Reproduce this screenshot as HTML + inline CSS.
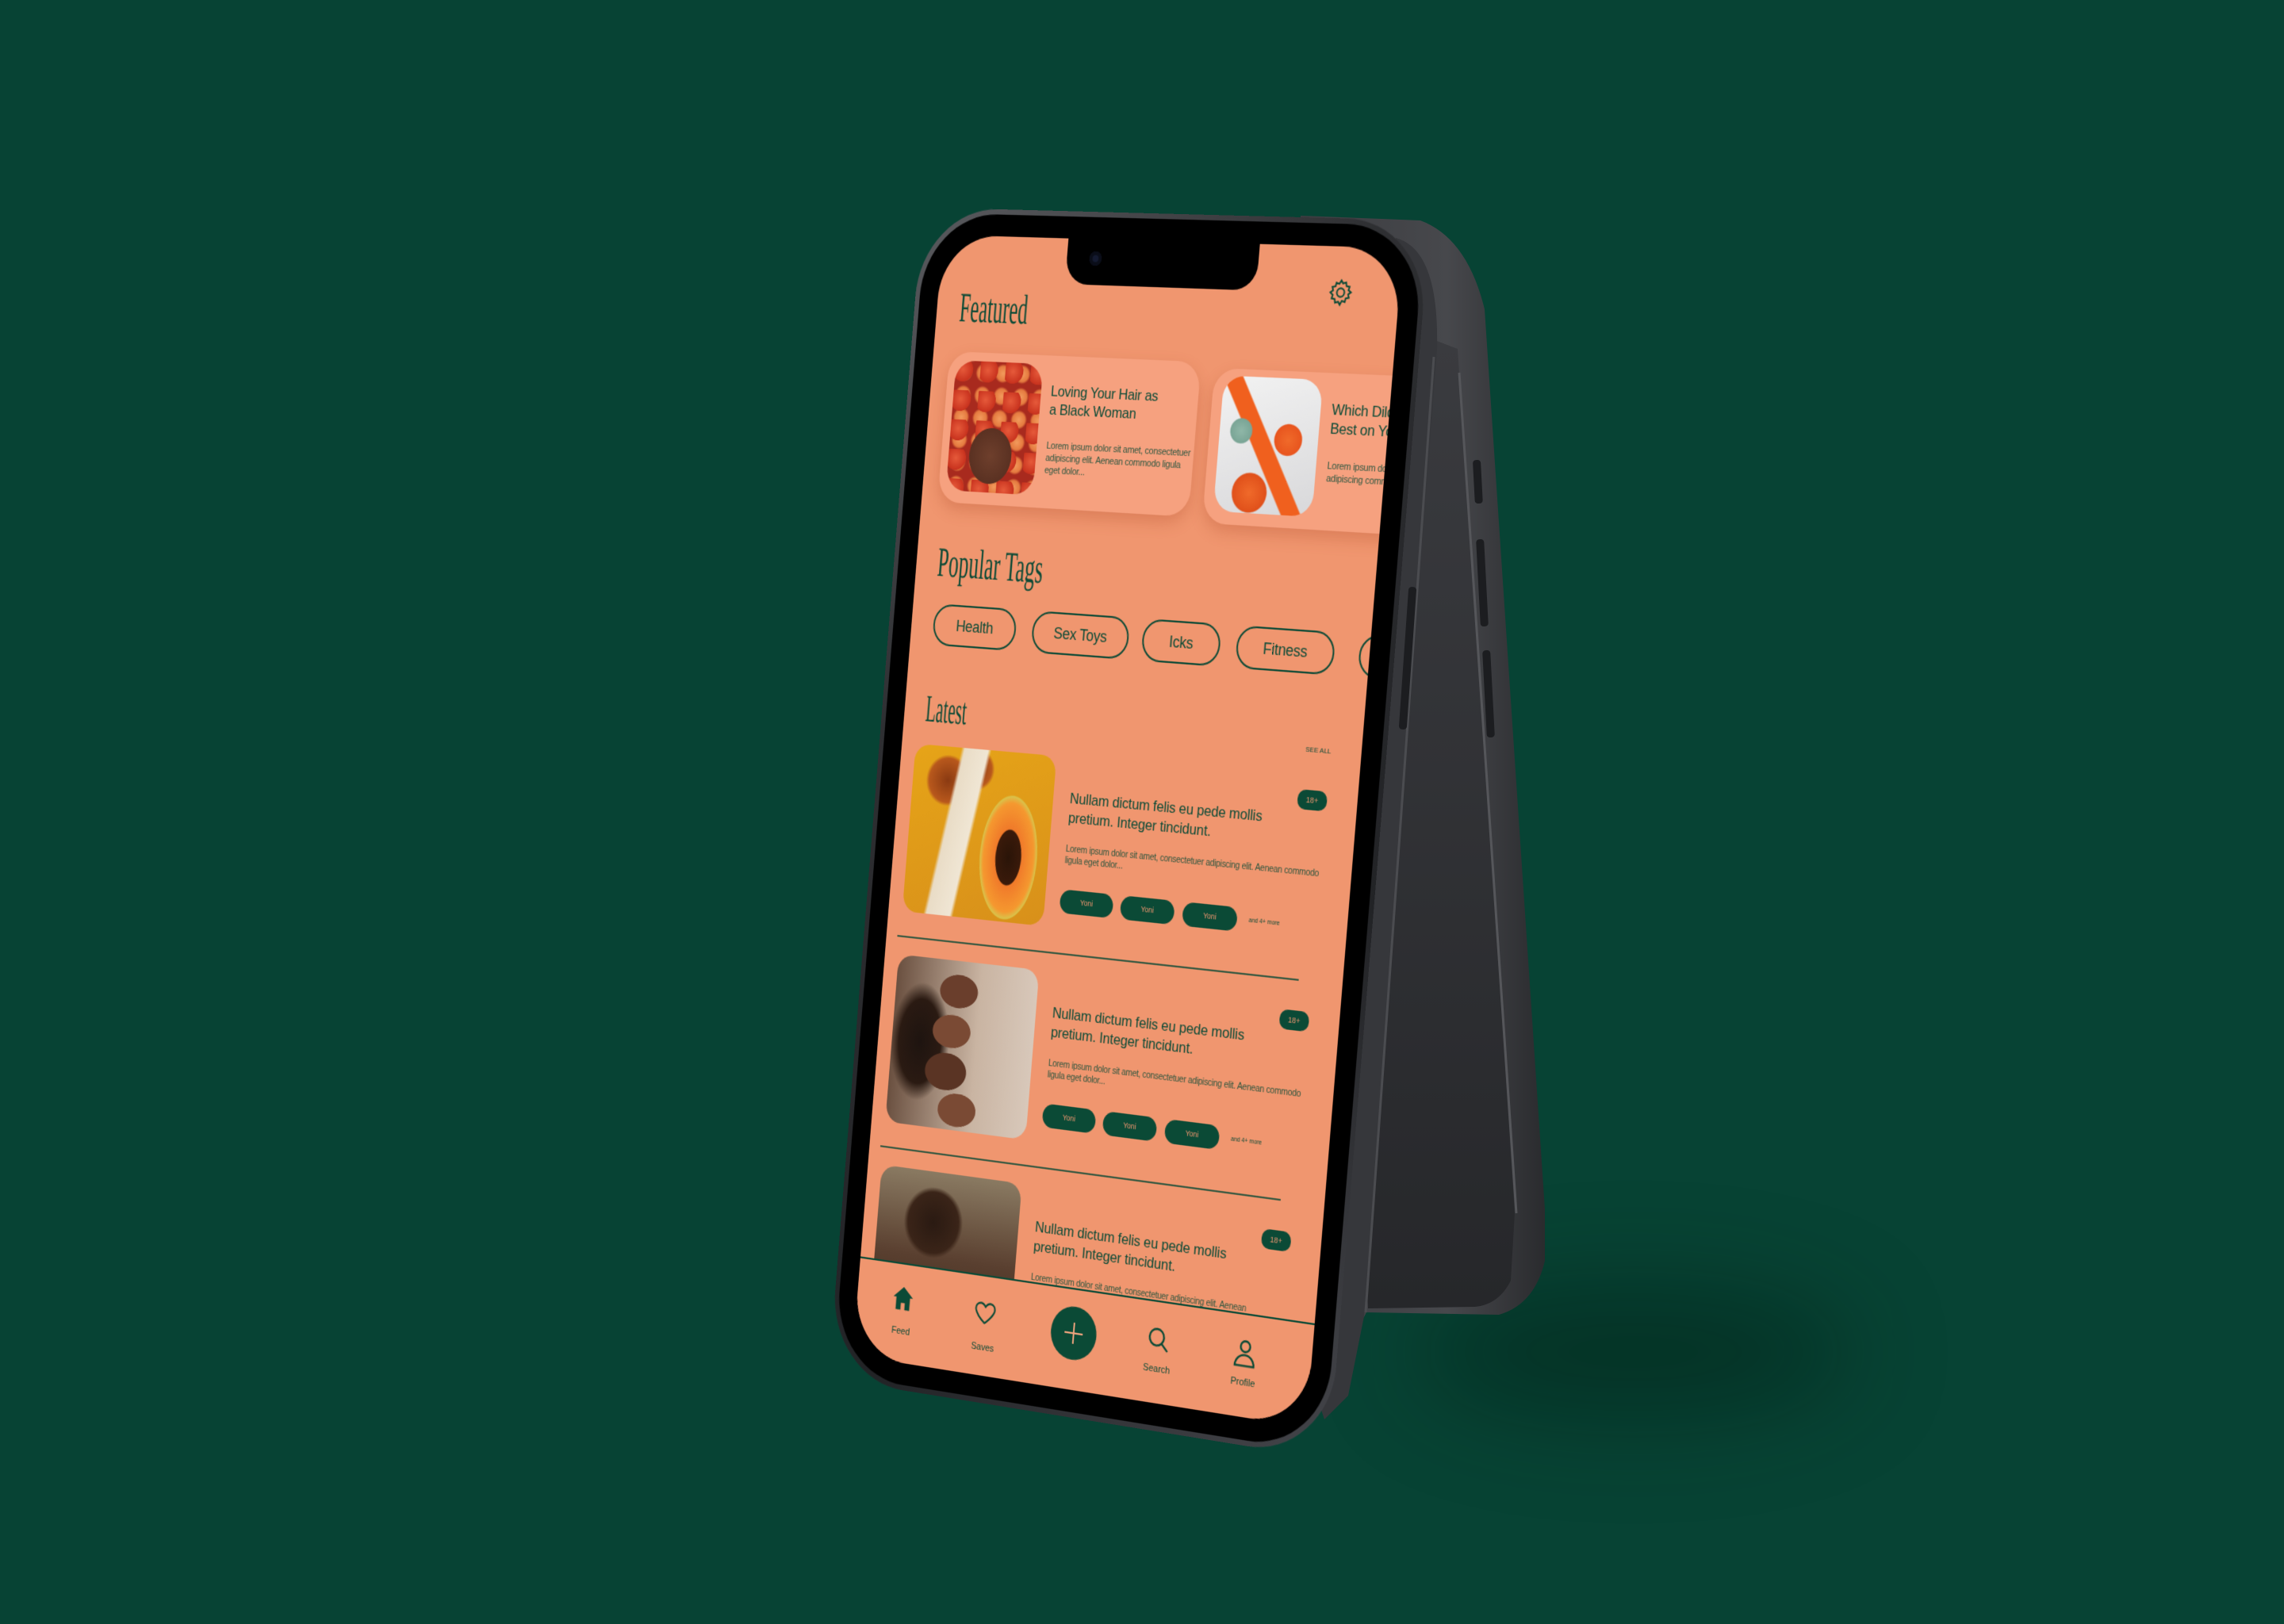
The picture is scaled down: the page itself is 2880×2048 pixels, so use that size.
<!DOCTYPE html>
<html><head><meta charset="utf-8"><style>
html,body{margin:0;padding:0}
body{width:2880px;height:2048px;overflow:hidden;background:#074334;position:relative;font-family:"Liberation Sans",sans-serif}
.abs{position:absolute}
#phone{position:absolute;left:0;top:0;width:600px;height:1300px;transform-origin:0 0;
transform:matrix3d(0.81935,0.0022667,0,-0.00008328,-0.084938,1.09130,0,0.0000025603,0,0,1,0,1189,296,0,1)}
.rim{position:absolute;left:-31px;top:-31px;right:-31px;bottom:-31px;border-radius:103px;background:linear-gradient(135deg,#5a5b5f,#2e2f32 30%,#222326 70%,#44454a);}
.bezel{position:absolute;left:-25px;top:-25px;right:-25px;bottom:-25px;border-radius:97px;background:#000}
.screen{position:absolute;left:0;top:0;width:600px;height:1300px;border-radius:74px;background:#f0966f;overflow:hidden;color:#0b4a36}
.h{position:absolute;font-family:"Liberation Serif",serif;font-size:48px;line-height:1;white-space:nowrap;transform-origin:0 0;color:#0d4a36}
.card{position:absolute;width:335px;height:174px;border-radius:30px;background:#f6a17f;box-shadow:0 8px 18px rgba(170,70,35,.28)}
.cimg{position:absolute;left:10px;top:10px;width:118px;height:150px;border-radius:26px;overflow:hidden}
.ct{position:absolute;left:141px;top:30px;font-size:17px;line-height:21px;width:190px;letter-spacing:-.3px;white-space:nowrap}
.cl{position:absolute;left:141px;top:96px;font-size:11px;line-height:14px;width:190px;letter-spacing:-.3px;opacity:.85}
.tag{position:absolute;top:425px;height:44px;border:2.5px solid #0d4a36;border-radius:26px;font-size:18px;line-height:44px;text-align:center;letter-spacing:-.3px}
.iimg{position:absolute;left:19px;width:191px;height:194px;border-radius:20px;overflow:hidden}
.it{position:absolute;left:232px;font-size:17px;line-height:22px;width:330px;letter-spacing:-.2px}
.il{position:absolute;left:232px;font-size:10.5px;line-height:13px;width:330px;letter-spacing:-.3px;opacity:.85}
.chip{position:absolute;width:70px;height:27px;border-radius:14px;background:#0b4a36;color:#f0966f;font-size:9px;line-height:27px;text-align:center}
.more{position:absolute;left:476px;font-size:7px}
.badge{position:absolute;left:525px;width:37px;height:22px;border-radius:10px;background:#0b4a36;color:#f0966f;font-size:9px;line-height:22px;text-align:center}
.div{position:absolute;left:15px;width:530px;height:1.5px;background:#0b4a36;opacity:.8}
.nl{position:absolute;top:1258px;font-size:11px;width:80px;text-align:center}
</style></head><body>

<div class="abs" style="left:1780px;top:1620px;width:560px;height:170px;border-radius:50%;background:rgba(0,20,12,.35);filter:blur(60px)"></div>

<svg class="abs" style="left:0;top:0" width="2880" height="2048">
<defs>
<linearGradient id="g1" x1="0" y1="0" x2="1" y2="0"><stop offset="0" stop-color="#3b3c40"/><stop offset=".6" stop-color="#47484c"/><stop offset="1" stop-color="#2a2b2e"/></linearGradient>
<linearGradient id="g2" x1="0" y1="0" x2="0" y2="1"><stop offset="0" stop-color="#3a3b3f"/><stop offset="1" stop-color="#26272a"/></linearGradient>
</defs>
<path d="M1640 272 L1791 278 Q1850 300 1872 390 L1948 1525 L1948 1590 Q1935 1645 1890 1658 L1723 1655 L1700 1700 Z" fill="url(#g1)"/>
<path d="M1812 430 L1838 440 L1910 1530 L1905 1615 Q1890 1645 1860 1648 L1725 1650 L1722 1590 Z" fill="url(#g2)"/>
<path d="M1840 470 L1912 1530" stroke="#55565a" stroke-width="3" fill="none"/>
<path d="M1760 300 Q1815 315 1812 440 L1720 1660 L1700 1760 L1670 1790 L1640 1700 Z" fill="#36373b"/>
<path d="M1808 450 L1722 1655" stroke="#4b4c50" stroke-width="3" fill="none"/>
<rect x="1858" y="580" width="10" height="55" rx="4" fill="#1c1d20" transform="rotate(-3 1863 600)"/>
<rect x="1864" y="680" width="10" height="110" rx="4" fill="#1c1d20" transform="rotate(-3 1869 735)"/>
<rect x="1872" y="820" width="10" height="110" rx="4" fill="#1c1d20" transform="rotate(-3 1877 875)"/>
<rect x="1770" y="740" width="10" height="180" rx="4" fill="#1c1d20" transform="rotate(4 1775 830)"/>
</svg>

<div id="phone">
 <div class="rim"></div>
 <div class="bezel"></div>
 <div class="screen">
  <div class="abs" style="left:170px;top:0;width:250px;height:52px;background:#000;border-radius:0 0 30px 30px"></div>
  <div class="abs" style="left:200px;top:14px;width:16px;height:16px;border-radius:50%;background:#141a30;box-shadow:inset 0 0 0 4px #0a0d18"></div>

  <div class="h" style="left:31px;top:60px;transform:scaleX(.55)">Featured</div>
  <svg class="abs" style="left:510px;top:34px" width="34" height="34" viewBox="0 0 24 24" fill="none" stroke="#0d4a36" stroke-width="1.4"><path d="M12 2.5l1.6 2.3 2.7-.8.5 2.8 2.8.5-.8 2.7 2.3 1.6-2.3 1.6.8 2.7-2.8.5-.5 2.8-2.7-.8L12 21.5l-1.6-2.3-2.7.8-.5-2.8-2.8-.5.8-2.7L2.9 12l2.3-1.6-.8-2.7 2.8-.5.5-2.8 2.7.8z"/><circle cx="12" cy="12" r="3.3"/></svg>

  <div class="card" style="left:22px;top:134px">
   <div class="cimg" style="background:radial-gradient(ellipse 34% 30% at 48% 72%,#6e3f2c 0,#5a3122 70%,transparent 72%),radial-gradient(circle at 30% 30%,#e65a3a 0,#c8321e 40%,transparent 42%) 0 0/34px 34px,radial-gradient(circle,#f29a5c 0,#e57a3f 45%,#a82a1e 60%) 0 0/26px 26px;background-color:#a3251c"></div>
   <div class="ct">Loving Your Hair as<br>a Black Woman</div>
   <div class="cl">Lorem ipsum dolor sit amet, consectetuer adipiscing elit. Aenean commodo ligula eget dolor...</div>
  </div>
  <div class="card" style="left:375px;top:140px">
   <div class="cimg" style="left:13px;top:8px;width:126px;height:152px;background:radial-gradient(circle at 70% 45%,#f06a2a 0,#e8551e 14%,transparent 15%),radial-gradient(circle at 35% 85%,#f06a2a 0,#e0501a 14%,transparent 15%),radial-gradient(circle at 22% 40%,#8fb7a8 0,#7aa596 10%,transparent 11%),linear-gradient(60deg,transparent 40%,#f0601e 41%,#f0601e 52%,transparent 53%),linear-gradient(160deg,#f2f2f2,#d8d8da)"></div>
   <div class="ct" style="left:153px">Which Dildo Is<br>Best on You?</div>
   <div class="cl" style="left:153px">Lorem ipsum dolor sit amet, consectetuer adipiscing commodo ligula</div>
  </div>

  <div class="h" style="left:29px;top:354px;transform:scaleX(.57)">Popular Tags</div>
  <div class="tag" style="left:30px;width:108px">Health</div>
  <div class="tag" style="left:164px;width:124px">Sex Toys</div>
  <div class="tag" style="left:310px;width:97px">Icks</div>
  <div class="tag" style="left:432px;width:120px">Fitness</div>
  <div class="tag" style="left:587px;width:100px">Food</div>

  <div class="h" style="left:29px;top:525px;font-size:44px;transform:scaleX(.52)">Latest</div>
  <div class="abs" style="left:530px;top:552px;font-size:8px">SEE ALL</div>

  <div class="iimg" style="top:588px;background:radial-gradient(ellipse 22% 40% at 72% 62%,#2a1408 0,#3a1a0a 40%,#f07a2a 42%,#f5982f 80%,#d9c24a 90%,transparent 92%),linear-gradient(100deg,transparent 28%,#e9dcc6 30%,#f0e6d4 44%,transparent 46%),radial-gradient(circle at 25% 20%,#8a3a12 0,#b8581c 12%,transparent 14%),radial-gradient(circle at 45% 12%,#8a3a12 0,#b8581c 10%,transparent 12%),linear-gradient(160deg,#e6a418,#d8901a)"></div>
  <div class="it" style="top:624px">Nullam dictum felis eu pede mollis<br>pretium. Integer tincidunt.</div>
  <div class="il" style="top:686px">Lorem ipsum dolor sit amet, consectetuer adipiscing elit. Aenean commodo ligula eget dolor...</div>
  <div class="chip" style="left:230px;top:738px">Yoni</div><div class="chip" style="left:310px;top:738px">Yoni</div><div class="chip" style="left:391px;top:738px">Yoni</div>
  <div class="more" style="top:748px">and 4+ more</div>
  <div class="badge" style="top:601px">18+</div>
  <div class="div" style="top:810px"></div>

  <div class="iimg" style="top:832px;background:radial-gradient(ellipse 22% 16% at 45% 18%,#6a3e2c 0,#6a3e2c 60%,transparent 62%),radial-gradient(ellipse 22% 16% at 42% 42%,#7a4a34 0,#7a4a34 60%,transparent 62%),radial-gradient(ellipse 24% 18% at 40% 66%,#5a3424 0,#5a3424 60%,transparent 62%),radial-gradient(ellipse 22% 16% at 50% 88%,#7a4a34 0,#7a4a34 60%,transparent 62%),radial-gradient(ellipse 30% 50% at 20% 50%,#1e1410 0,#2a1a12 50%,transparent 70%),linear-gradient(90deg,#6a5040,#c9b4a2 60%,#d8c8ba)"></div>
  <div class="it" style="top:868px">Nullam dictum felis eu pede mollis<br>pretium. Integer tincidunt.</div>
  <div class="il" style="top:930px">Lorem ipsum dolor sit amet, consectetuer adipiscing elit. Aenean commodo ligula eget dolor...</div>
  <div class="chip" style="left:230px;top:982px">Yoni</div><div class="chip" style="left:310px;top:982px">Yoni</div><div class="chip" style="left:391px;top:982px">Yoni</div>
  <div class="more" style="top:992px">and 4+ more</div>
  <div class="badge" style="top:845px">18+</div>
  <div class="div" style="top:1054px"></div>

  <div class="iimg" style="top:1076px;background:radial-gradient(ellipse 30% 40% at 55% 90%,#e8a070 0,#c77a4a 50%,transparent 70%),radial-gradient(ellipse 30% 30% at 40% 30%,#2a1a12 0,#3a2418 60%,transparent 70%),linear-gradient(180deg,#8a7a62,#5a4030 50%,#3a2418)"></div>
  <div class="it" style="top:1112px">Nullam dictum felis eu pede mollis<br>pretium. Integer tincidunt.</div>
  <div class="il" style="top:1174px">Lorem ipsum dolor sit amet, consectetuer adipiscing elit. Aenean</div>
  <div class="badge" style="top:1089px">18+</div>

  <div class="abs" style="left:0;top:1185px;width:600px;height:115px;background:#f0966f;border-top:2px solid #0b4a36"></div>
  <svg class="abs" style="left:47px;top:1210px" width="32" height="32" viewBox="0 0 24 24"><path d="M12 2L2 11h3v11h5v-6h4v6h5V11h3z" fill="#0b4a36"/></svg>
  <div class="nl" style="left:23px">Feed</div>
  <svg class="abs" style="left:158px;top:1212px" width="34" height="32" viewBox="0 0 24 24" fill="none" stroke="#0b4a36" stroke-width="1.6"><path d="M12 21s-8-6-9.3-10.8C1.8 6.5 4.3 4 7.2 4c2 0 3.5 1.2 4.8 3 1.3-1.8 2.8-3 4.8-3 2.9 0 5.4 2.5 4.5 6.2C20 15 12 21 12 21z"/></svg>
  <div class="nl" style="left:135px;top:1262px">Saves</div>
  <div class="abs" style="left:264px;top:1206px;width:60px;height:60px;border-radius:50%;background:#0b4a36"></div>
  <svg class="abs" style="left:276px;top:1218px" width="36" height="36" viewBox="0 0 36 36" stroke="#f0a47e" stroke-width="2"><path d="M18 6v24M6 18h24"/></svg>
  <svg class="abs" style="left:389px;top:1212px" width="32" height="34" viewBox="0 0 24 24" fill="none" stroke="#0b4a36" stroke-width="1.8"><circle cx="10" cy="10" r="7"/><path d="M15 15l6 6"/></svg>
  <div class="nl" style="left:365px;top:1256px">Search</div>
  <svg class="abs" style="left:500px;top:1212px" width="32" height="36" viewBox="0 0 24 26" fill="none" stroke="#0b4a36" stroke-width="1.8"><circle cx="12" cy="7" r="4.5"/><path d="M3 23c0-5 4-9 9-9s9 4 9 9z"/></svg>
  <div class="nl" style="left:476px;top:1256px">Profile</div>
 </div>
</div>
</body></html>
